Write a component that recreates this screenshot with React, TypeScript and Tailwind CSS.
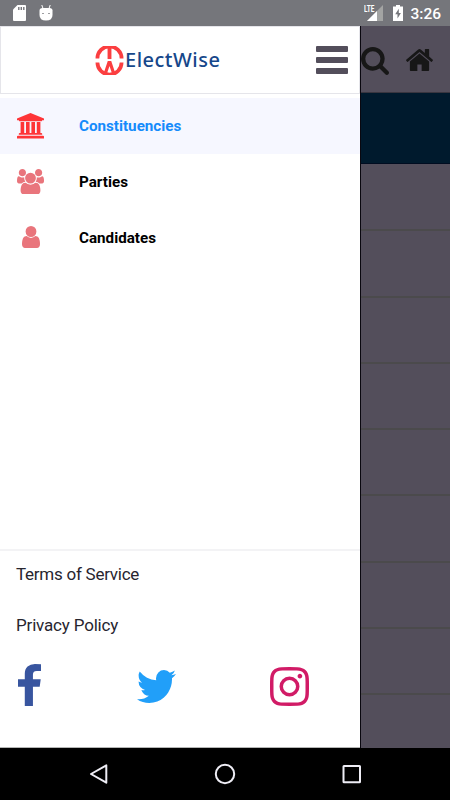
type GlyphProps = {
    d: string
    viewBox: string
    className: string
}

const PATHS = {
    university:
        'M896 0l960 384v128h-128q0 26-20.5 45t-48.5 19h-1526q-28 0-48.5-19t-20.5-45h-128v-128zm-704 640h256v768h128v-768h256v768h128v-768h256v768h128v-768h256v768h59q28 0 48.5 19t20.5 45v64h-1664v-64q0-26 20.5-45t48.5-19h59v-768zm1595 960q28 0 48.5 19t20.5 45v128h-1920v-128q0-26 20.5-45t48.5-19h1782z',
    users:
        'M529 896q-162 5-265 128h-134q-82 0-138-40.5t-56-118.5q0-353 124-353 6 0 43.5 21t97.5 42.5 119 21.5q67 0 133-23-5 37-5 66 0 143 83 256zm1071 637q0 120-73 189.5t-194 69.5h-874q-121 0-194-69.5t-73-189.5q0-53 3.5-103.5t14-109 26.5-108.5 43-97.5 62-81 85.5-53.5 111.5-20q10 0 43 21.5t73 48 107 48 135 21.5 135-21.5 107-48 73-48 43-21.5q61 0 111.5 20t85.5 53.5 62 81 43 97.5 26.5 108.5 14 109 3.5 103.5zm-1024-1277q0 106-75 181t-181 75-181-75-75-181 75-181 181-75 181 75 75 181zm704 384q0 159-112.5 271.5t-271.5 112.5-271.5-112.5-112.5-271.5 112.5-271.5 271.5-112.5 271.5 112.5 112.5 271.5zm576 225q0 78-56 118.5t-138 40.5h-134q-103-123-265-128 83-113 83-256 0-29-5-66 66 23 133 23 59 0 119-21.5t97.5-42.5 43.5-21q124 0 124 353zm-128-609q0 106-75 181t-181 75-181-75-75-181 75-181 181-75 181 75 75 181z',
    user:
        'M1536 1399q0 109-62.5 187t-150.5 78h-854q-88 0-150.5-78t-62.5-187q0-85 8.5-160.5t31.5-152 58.5-131 94-89 134.5-34.5q131 128 313 128t313-128q76 0 134.5 34.5t94 89 58.5 131 31.5 152 8.5 160.5zm-256-887q0 159-112.5 271.5t-271.5 112.5-271.5-112.5-112.5-271.5 112.5-271.5 271.5-112.5 271.5 112.5 112.5 271.5z',
    search:
        'M1216 832q0-185-131.5-316.5t-316.5-131.5-316.5 131.5-131.5 316.5 131.5 316.5 316.5 131.5 316.5-131.5 131.5-316.5zm512 832q0 52-38 90t-90 38q-54 0-90-38l-343-342q-179 124-399 124-143 0-273.5-55.5t-225-150-150-225-55.5-273.5 55.5-273.5 150-225 225-150 273.5-55.5 273.5 55.5 225 150 150 225 55.5 273.5q0 220-124 399l343 343q37 37 37 90z',
    home:
        'M1472 992v480q0 26-19 45t-45 19h-384v-384h-256v384h-384q-26 0-45-19t-19-45v-480q0-1 .5-3t.5-3l575-474 575 474q1 2 1 6zm223-69l-62 74q-8 9-21 11h-3q-13 0-21-7l-692-577-692 577q-12 8-24 7-13-2-21-11l-62-74q-8-10-7-23.5t11-21.5l719-599q32-26 76-26t76 26l244 204v-195q0-14 9-23t23-9h192q14 0 23 9t9 23v408l219 182q10 8 11 21.5t-7 23.5z',
    facebook:
        'M1343 12v264h-157q-86 0-116 36t-30 108v189h293l-39 296h-254v759h-306v-759h-255v-296h255v-218q0-186 104-288.5t277-102.5q147 0 228 12z',
    twitter:
        'M1684 408q-67 98-162 167 1 14 1 42 0 130-38 259.5t-115.5 248.5-184.5 210.5-258 146-323 54.5q-271 0-496-145 35 4 78 4 225 0 401-138-105-2-188-64.5t-114-159.5q33 5 61 5 43 0 85-11-112-23-185.5-111.5t-73.5-205.5v-4q68 38 146 41-66-44-105-115t-39-154q0-88 44-163 121 149 294.5 238.5t371.5 99.5q-8-38-8-74 0-134 94.5-228.5t228.5-94.5q140 0 236 102 109-21 205-78-37 115-142 178 93-10 186-50z',
    instagram:
        'M1152 896q0-106-75-181t-181-75-181 75-75 181 75 181 181 75 181-75 75-181zm138 0q0 164-115 279t-279 115-279-115-115-279 115-279 279-115 279 115 115 279zm108-410q0 38-27 65t-65 27-65-27-27-65 27-65 65-27 65 27 27 65zm-502-220q-7 0-76.5-.5t-105.5 0-96.5 3-103 10-71.5 18.5q-50 20-88 58t-58 88q-11 29-18.5 71.5t-10 103-3 96.5 0 105.5.5 76.5-.5 76.5 0 105.5 3 96.5 10 103 18.5 71.5q20 50 58 88t88 58q29 11 71.5 18.5t103 10 96.5 3 105.5 0 76.5-.5 76.5.5 105.5 0 96.5-3 103-10 71.5-18.5q50-20 88-58t58-88q11-29 18.5-71.5t10-103 3-96.5 0-105.5-.5-76.5.5-76.5 0-105.5-3-96.5-10-103-18.5-71.5q-20-50-58-88t-88-58q-29-11-71.5-18.5t-103-10-96.5-3-105.5 0-76.5.5zm768 630q0 229-5 317-10 208-124 322t-322 124q-88 5-317 5t-317-5q-208-10-322-124t-124-322q-5-88-5-317t5-317q10-208 124-322t322-124q88-5 317-5t317 5q208 10 322 124t124 322q5 88 5 317z',
}

function Glyph({ d, viewBox, className }: GlyphProps) {
    return (
        <svg viewBox={viewBox} preserveAspectRatio="none" fill="currentColor" className={className}>
            <path d={d} />
        </svg>
    )
}

function StatusBar() {
    return (
        <div className="flex h-[26px] shrink-0 items-center bg-[#75767b] pr-[9px] pl-[13px] text-white">
            <svg viewBox="0 0 13 16" className="h-4 w-[13px]">
                <path d="M4.5 0H12q1 0 1 1v14q0 1-1 1H1q-1 0-1-1V4.5z" fill="#fff" />
                <path d="M5.8 2v3M8.3 2v3M10.8 2v3" stroke="#75767b" strokeWidth="1.4" />
            </svg>
            <svg viewBox="0 0 14 16" className="ml-[13px] h-4 w-[14px]">
                <path d="M2.8 0L4 3.5M11.2 0L10 3.5" stroke="#fff" strokeWidth="1" />
                <path d="M.5 5.5q0-2.5 3-2.5h7q3 0 3 2.5v4.5q0 5.5-6.5 5.5T.5 10z" fill="#fff" />
                <path d="M3.3 8.5h1.4M9.3 8.5h1.4" stroke="#75767b" strokeWidth="1.2" />
            </svg>
            <div className="ml-auto flex items-center">
                <div className="relative h-4 w-5">
                    <svg viewBox="0 0 16 16" className="absolute top-0 right-0 size-4">
                        <path d="M16 0v16H0z" fill="#a3a4a3" />
                        <path d="M10 6V16H0z" fill="#fff" />
                    </svg>
                    <span className="absolute top-0 left-px origin-left scale-x-[0.68] bg-[#75767b] font-[Roboto] text-[9.5px] leading-[8px] font-bold">
                        LTE
                    </span>
                </div>
                <svg viewBox="0 0 10 16" className="ml-[10px] h-4 w-[10px]">
                    <path d="M3 0h4v1.6h3V16H0V1.6h3z" fill="#fff" />
                    <path d="M5.8 3.8L2.2 9.3h2.3v4.3l3.4-5.7H5.8z" fill="#75767b" />
                </svg>
                <span className="mt-[3px] ml-[7px] text-[15.5px] leading-none font-medium">3:26</span>
            </div>
        </div>
    )
}

function Logo() {
    return (
        <div className="flex items-center">
            <svg viewBox="0 0 30 30" className="h-[29px] w-[29px]" fill="none" stroke="#fb3e40">
                <path d="M2.5 12.9A12.5 12.5 0 0 1 27.5 12.9M2.5 17A12.5 12.5 0 0 0 27.5 17" strokeWidth="3.9" />
                <path d="M15 2v11.5" strokeWidth="4" />
                <path d="M10.9 27.8L14.4 17.2h1.2L19.1 27.8" strokeWidth="3.3" />
            </svg>
            <span className="mb-px ml-px font-['Noto_Sans'] text-[20px] leading-7 font-medium tracking-[0.5px] text-[#16478a]">
                ElectWise
            </span>
        </div>
    )
}

const menu = [
    {
        label: 'Constituencies',
        d: PATHS.university,
        viewBox: '-64 0 1920 1792',
        row: 'bg-[#f6f7ff]',
        text: 'text-[#158bfb]',
        icon: 'h-[25.5px] w-[27px] text-[#fe3538]',
    },
    {
        label: 'Parties',
        d: PATHS.users,
        viewBox: '-64 0 1920 1792',
        row: '',
        text: 'text-black',
        icon: 'h-[25.5px] w-[27px] text-[#e9757c]',
    },
    {
        label: 'Candidates',
        d: PATHS.user,
        viewBox: '256 128 1280 1536',
        row: '',
        text: 'text-black',
        icon: 'h-[22px] w-[18px] text-[#e9757c]',
    },
]

function Drawer() {
    return (
        <aside className="flex w-[361px] shrink-0 flex-col border-r border-[#09070f] bg-white">
            <header className="flex h-[68px] items-center border border-[#e5e5ea] pr-[11px] pl-[94px]">
                <Logo />
                <div className="ml-auto flex flex-col gap-[5px]">
                    <div className="h-[5.7px] w-8 rounded-[1px] bg-[#534e5b]" />
                    <div className="h-[5.7px] w-8 rounded-[1px] bg-[#534e5b]" />
                    <div className="h-[5.7px] w-8 rounded-[1px] bg-[#534e5b]" />
                </div>
            </header>

            <nav className="mt-1">
                {menu.map(item => (
                    <div key={item.label} className={`flex h-[55.7px] items-center pl-[17px] ${item.row}`}>
                        <div className="flex w-[27px] justify-center">
                            <Glyph d={item.d} viewBox={item.viewBox} className={item.icon} />
                        </div>
                        <span className={`mt-[1.2px] ml-[35px] text-[15.2px] leading-6 font-bold ${item.text}`}>
                            {item.label}
                        </span>
                    </div>
                ))}
            </nav>

            <footer className="mt-auto h-[199px] border-t-2 border-b border-t-[#f3f3f5] border-b-[#b4b5b4] text-[#27252f]">
                <p className="mt-[11px] pl-4 text-[17px] leading-6 tracking-[-0.25px]">Terms of Service</p>
                <p className="mt-[27px] pl-4 text-[17px] leading-6 tracking-[-0.18px]">Privacy Policy</p>
                <div className="mt-[27px] flex h-[42px] items-center pl-[18px]">
                    <Glyph d={PATHS.facebook} viewBox="479 0 864 1664" className="h-[42px] w-[23px] text-[#38559f]" />
                    <Glyph d={PATHS.twitter} viewBox="108 256 1576 1280" className="mt-[3px] ml-[95.5px] h-[33px] w-[39px] text-[#219ff9]" />
                    <Glyph d={PATHS.instagram} viewBox="128 128 1536 1536" className="mt-[3px] ml-[94.5px] size-[39px] text-[#d11b66]" />
                </div>
            </footer>
        </aside>
    )
}

function DimmedPage() {
    return (
        <main className="flex min-w-0 flex-1 flex-col overflow-hidden bg-[#534e5b]">
            <div className="flex h-[67px] shrink-0 items-center border-b border-[#393640] text-[#171717]">
                <Glyph d={PATHS.search} viewBox="64 128 1664 1664" className="mt-1 size-7" />
                <Glyph d={PATHS.home} viewBox="89 253 1614 1283" className="mt-0.5 ml-[17px] h-[22px] w-[27px]" />
            </div>
            <div className="h-[71px] shrink-0 border-b border-[#000c20] bg-[#001a2d]" />
            <div className="mt-px flex flex-col">
                {[0, 1, 2, 3, 4, 5, 6, 7, 8].map(row => (
                    <div key={row} className="h-[66.3px] shrink-0 border-b-2 border-[#4b4a4c]" />
                ))}
            </div>
        </main>
    )
}

function NavigationBar() {
    return (
        <div className="flex h-[52px] shrink-0 items-center justify-between bg-black pr-[88px] pl-[88px]">
            <svg viewBox="0 0 20 20" className="size-5" fill="none" stroke="#eeedf5" strokeWidth="2">
                <path d="M18.3 1.3v17.4L3 10z" strokeLinejoin="round" />
            </svg>
            <svg viewBox="0 0 22 22" className="size-[22px]" fill="none" stroke="#eeedf5" strokeWidth="2">
                <circle cx="11" cy="11" r="9.2" />
            </svg>
            <svg viewBox="0 0 20 20" className="size-5" fill="none" stroke="#eeedf5" strokeWidth="2">
                <rect x="1.5" y="2" width="16.5" height="16.2" rx=".5" />
            </svg>
        </div>
    )
}

export default function App() {
    return (
        <div className="flex h-screen w-full flex-col overflow-hidden font-[Roboto,sans-serif]">
            <StatusBar />
            <div className="flex min-h-0 flex-1">
                <Drawer />
                <DimmedPage />
            </div>
            <NavigationBar />
        </div>
    )
}
